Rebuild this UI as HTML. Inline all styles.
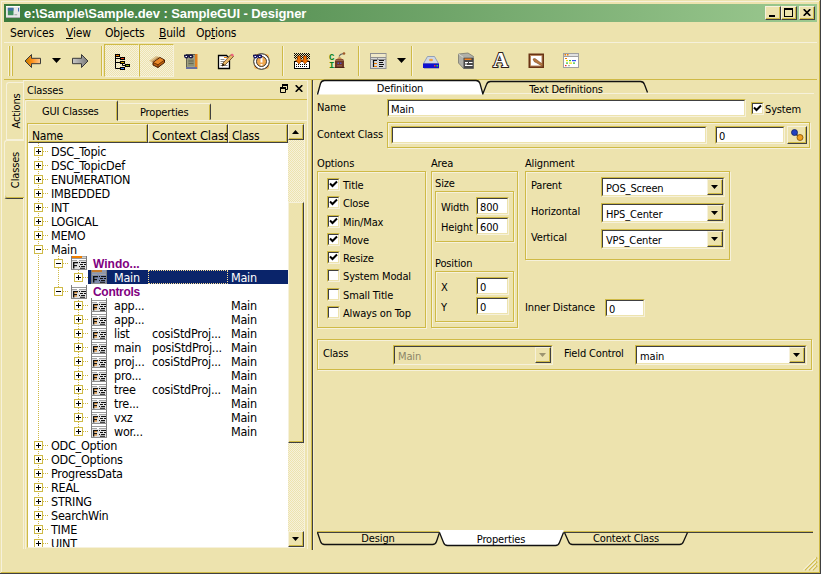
<!DOCTYPE html><html><head><meta charset="utf-8"><title>Designer</title><style>
*{box-sizing:border-box;margin:0;padding:0}
html,body{width:821px;height:574px;overflow:hidden;background:#ede3ae}
body{font-family:"DejaVu Sans Condensed","Liberation Sans",sans-serif;font-size:11px;letter-spacing:-0.15px;color:#000;position:relative}
.f12{font-size:12px;letter-spacing:-0.2px}
.f13{font-size:12.5px;letter-spacing:-0.25px}
.tr .t{margin-top:0}
.a{position:absolute}
.t{position:absolute;white-space:nowrap;line-height:14px;height:14px;margin-top:1px}
.u{text-decoration:underline}
.sunk{position:absolute;background:#fff;border:1px solid;border-color:#cfba46 #f6f1db #f6f1db #cfba46;}
.sunk:before{content:"";position:absolute;left:0;top:0;right:0;bottom:0;border:1px solid;border-color:#404040 #ede3ae #ede3ae #404040}
.sunk .t{left:3px;top:2px}
.grp{position:absolute;border:1px solid #cfba46;box-shadow:inset 1px 1px 0 #f6f1db,1px 1px 0 #f6f1db}
.btn{position:absolute;background:#ede3ae;border:1px solid;border-color:#f6f1db #404040 #404040 #f6f1db;box-shadow:inset -1px -1px 0 #cfba46}
.hl{position:absolute;height:1px}
.vl{position:absolute;width:1px}
.chk{position:absolute;width:13px;height:13px}
.dither{background-color:#ede3ae;background-image:conic-gradient(#f6f1db 25%,#ede3ae 0 50%,#f6f1db 0 75%,#ede3ae 0);background-size:2px 2px}
.arr{position:absolute;width:7px;height:4px;background:#000;clip-path:polygon(0 0,100% 0,50% 100%)}
.arrup{position:absolute;width:7px;height:4px;background:#000;clip-path:polygon(0 100%,100% 100%,50% 0)}
.row{position:absolute;left:0;height:14px;width:259px}
.pm{position:absolute;width:9px;height:9px;border:1px solid #cfba46;background:#fff}
.pm:before{content:"";position:absolute;left:1px;top:3px;width:5px;height:1px;background:#000}
.pm.p:after{content:"";position:absolute;left:3px;top:1px;width:1px;height:5px;background:#000}
.dh{position:absolute;height:1px;background-image:linear-gradient(90deg,#cfba46 50%,transparent 0);background-size:2px 1px}
.dv{position:absolute;width:1px;background-image:linear-gradient(#cfba46 50%,transparent 0);background-size:1px 2px}
.bold{font-weight:bold}
</style></head><body>
<div class="hl" style="left:1px;top:1px;width:818px;background:#f6f1db"></div>
<div class="vl" style="left:1px;top:1px;height:571px;background:#f6f1db"></div>
<div class="vl" style="left:819px;top:1px;height:572px;background:#cfba46"></div>
<div class="hl" style="left:1px;top:572px;width:819px;background:#cfba46"></div>
<div class="vl" style="left:820px;top:0px;height:574px;background:#404040"></div>
<div class="hl" style="left:0px;top:573px;width:821px;background:#404040"></div>
<div class="a" style="left:4px;top:4px;width:813px;height:18px;background:linear-gradient(90deg,#3b7a3c 0%,#9cc990 100%)"></div>
<svg class="a" style="left:6px;top:6px" width="14" height="12" viewBox="0 0 15 13" preserveAspectRatio="none"><rect x="0" y="0" width="15" height="13" fill="#e8e8e8"/><rect x="0" y="0" width="15" height="1" fill="#fff"/><rect x="2" y="2" width="6" height="8" fill="#3f8f5f"/><rect x="2" y="2" width="6" height="3" fill="#3f6fa8"/><rect x="9" y="9" width="3" height="1" fill="#999"/><rect x="13" y="2" width="1" height="4" fill="#2a5fb0"/><rect x="0" y="12" width="15" height="1" fill="#aaa"/></svg>
<div class="t " style="left:24px;top:6px;color:#fff;font-weight:bold;font-size:13px;letter-spacing:-0.07px;font-family:'Liberation Sans',sans-serif">e:\Sample\Sample.dev : SampleGUI - Designer</div>
<div class="btn" style="left:765px;top:6px;width:16px;height:14px"></div>
<div class="btn" style="left:781px;top:6px;width:16px;height:14px"></div>
<div class="btn" style="left:799px;top:6px;width:16px;height:14px"></div>
<div class="a" style="left:769px;top:15px;width:6px;height:2px;background:#000"></div>
<div class="a" style="left:784px;top:8px;width:9px;height:9px;border:1px solid #000;border-top-width:2px"></div>
<svg class="a" style="left:803px;top:9px" width="8" height="7" viewBox="0 0 8 7"><path d="M0.700 0.200L7.300 6.800M7.300 0.200L0.700 6.800" stroke="#000" stroke-width="1.700" fill="none"/></svg>
<div class="t f12" style="left:10px;top:25px;">Services</div>
<div class="t f12" style="left:66px;top:25px;"><span class="u">V</span>iew</div>
<div class="t f12" style="left:105px;top:25px;">Objects</div>
<div class="t f12" style="left:159px;top:25px;"><span class="u">B</span>uild</div>
<div class="t f12" style="left:196px;top:25px;">Op<span class="u">t</span>ions</div>
<div class="hl" style="left:4px;top:42px;width:813px;background:#f6f1db"></div>
<div class="vl" style="left:8px;top:46px;height:30px;background:#f6f1db"></div>
<div class="vl" style="left:9px;top:46px;height:30px;background:#cfba46"></div>
<div class="vl" style="left:11px;top:46px;height:30px;background:#f6f1db"></div>
<div class="vl" style="left:12px;top:46px;height:30px;background:#cfba46"></div>
<div class="vl" style="left:101px;top:46px;height:30px;background:#cfba46"></div>
<div class="vl" style="left:102px;top:46px;height:30px;background:#f6f1db"></div>
<div class="vl" style="left:282px;top:46px;height:30px;background:#cfba46"></div>
<div class="vl" style="left:283px;top:46px;height:30px;background:#f6f1db"></div>
<div class="vl" style="left:358px;top:46px;height:30px;background:#cfba46"></div>
<div class="vl" style="left:359px;top:46px;height:30px;background:#f6f1db"></div>
<div class="vl" style="left:411px;top:46px;height:30px;background:#cfba46"></div>
<div class="vl" style="left:412px;top:46px;height:30px;background:#f6f1db"></div>
<div class="a dither" style="left:104px;top:44px;width:35px;height:33px;border:1px solid;border-color:#cfba46 #f6f1db #f6f1db #cfba46"></div>
<div class="a dither" style="left:139px;top:44px;width:35px;height:33px;border:1px solid;border-color:#cfba46 #f6f1db #f6f1db #cfba46"></div>
<svg class="a" style="left:24px;top:53px" width="18" height="16" viewBox="0 0 18 16"><defs><linearGradient id="go" x1="0" x2="1"><stop offset="0" stop-color="#b87800"/><stop offset=".45" stop-color="#ff9018"/><stop offset="1" stop-color="#ffc890"/></linearGradient><linearGradient id="gg" x1="0" x2="1"><stop offset="0" stop-color="#c8c8c8"/><stop offset="1" stop-color="#787878"/></linearGradient></defs><path d="M1 8L7.5 1.5V5.3H16.5V10.7H7.5V14.5Z" fill="url(#go)" stroke="#3a3a3a" stroke-width="1"/></svg>
<svg class="a" style="left:71px;top:53px" width="18" height="16" viewBox="0 0 18 16"><path d="M17 8L10.5 1.5V5.3H1.5V10.7H10.5V14.5Z" fill="url(#gg)" stroke="#3a3a3a" stroke-width="1"/></svg>
<svg class="a" style="left:114px;top:53px" width="17" height="18" viewBox="0 0 17 18"><path d="M1.500 3V15.500H7M1.500 5.500H7M1.500 9.500H7M8.500 11V12.500H12" stroke="#000" stroke-width="1" fill="none"/><rect x="1.500" y="1.500" width="4" height="2" fill="#f08000" stroke="#000"/><rect x="6.500" y="4.500" width="4" height="2" fill="#e84010" stroke="#000"/><rect x="6.500" y="8.500" width="4" height="2" fill="#c8a000" stroke="#000"/><rect x="11.500" y="11.500" width="4" height="2" fill="#80a000" stroke="#000"/><rect x="6.500" y="14.500" width="4" height="2" fill="#4080f0" stroke="#000"/></svg>
<svg class="a" style="left:147px;top:54px" width="20" height="16" viewBox="0 0 20 16"><path d="M2 7L9 2L13 3L6 8Z" fill="#b88030" opacity=".4"/><path d="M4 8L11 3L13 3.500L6 8.500Z" fill="#a06020" opacity=".5"/><path d="M6 8.500L13 3.500L17.500 6L17.500 8.500L11 13.500L6 11Z" fill="#c06410" stroke="#401800" stroke-width="1"/><path d="M6.500 8.500L13 4L17 6.200L11 10.300Z" fill="#e88828"/><path d="M6 8.500L11 10.800L17.500 6M11 10.800V13.500" stroke="#602800" stroke-width=".8" fill="none"/></svg>
<svg class="a" style="left:183px;top:52px" width="16" height="18" viewBox="0 0 16 18"><rect x="3.5" y="2.500" width="10" height="14" fill="#a0a080" stroke="#606050"/><rect x="12" y="2" width="2.500" height="15" fill="#e08020"/><rect x="5" y="7" width="6" height="7" fill="#8c9078"/><path d="M5.500 9h5M5.500 11.500h5" stroke="#686850"/><rect x="3" y="15" width="11" height="2" fill="#6870a0"/><path d="M1 3.500h9" stroke="#101030" stroke-width="1.500"/><ellipse cx="3.500" cy="4.500" rx="2.300" ry="2" fill="#181848"/><ellipse cx="8" cy="4.500" rx="2.300" ry="2" fill="#181848"/><rect x="2.500" y="4" width="1.500" height="1" fill="#fff"/><rect x="7" y="4" width="1.500" height="1" fill="#fff"/></svg>
<svg class="a" style="left:217px;top:52px" width="18" height="18" viewBox="0 0 18 18"><path d="M1.500 3.500H9.500L12.500 6.500V16.500H1.500Z" fill="#fff" stroke="#000" stroke-width="1.300"/><path d="M3.500 7.500h4M3.500 9.500h5M3.500 11.500h3M3.500 13.500h7" stroke="#888"/><rect x="7" y="5" width="3" height="1" fill="#f08000"/><path d="M5 14L6 11L14 2.500L16.500 4.500L8 13Z" fill="#e8b868" stroke="#604020" stroke-width=".8"/><path d="M13.500 3L15 1.500L17 3L16 4.500Z" fill="#f06080"/><path d="M5 14L6 11.500L7.500 13Z" fill="#000"/></svg>
<svg class="a" style="left:252px;top:52px" width="18" height="18" viewBox="0 0 18 18"><rect x="2" y="2" width="15" height="15" rx="3" fill="#f0a850"/><circle cx="9.500" cy="9.500" r="6.500" fill="none" stroke="#fff" stroke-width="2.600"/><circle cx="9.500" cy="9.500" r="7.800" fill="none" stroke="#202020" stroke-width="1"/><circle cx="9.500" cy="9.500" r="5" fill="none" stroke="#303030" stroke-width=".9"/><path d="M9.500 5.500V10.500M9.500 12v1.500" stroke="#fff" stroke-width="2"/><path d="M1 3.500h9" stroke="#101030" stroke-width="1.500"/><ellipse cx="3.500" cy="4.500" rx="2.300" ry="2" fill="#181868"/><ellipse cx="8" cy="4.500" rx="2.300" ry="2" fill="#181868"/><rect x="2.500" y="4" width="1.500" height="1" fill="#fff"/><rect x="7" y="4" width="1.500" height="1" fill="#fff"/></svg>
<svg class="a" style="left:293px;top:52px" width="18" height="18" viewBox="0 0 18 18"><defs><pattern id="dots" width="2" height="2" patternUnits="userSpaceOnUse"><rect width="1" height="1" fill="#000"/><rect x="1" y="1" width="1" height="1" fill="#000"/></pattern></defs><rect x="1" y="1" width="16" height="6" fill="url(#dots)"/><rect x="1.500" y="9.500" width="15" height="7" fill="#fff" stroke="#000"/><path d="M3 12.500h12M3 14.500h12" stroke="#000" stroke-dasharray="1 1"/><path d="M4.500 4h3v4h2l-3.500 4l-3.500-4h2Z" fill="#f07000" stroke="#803000" stroke-width=".6"/><path d="M10.500 4h3v4h2l-3.500 4l-3.500-4h2Z" fill="#f07000" stroke="#803000" stroke-width=".6"/></svg>
<div class="t" style="left:329px;top:53px;font:bold 9px/8px 'Liberation Mono',monospace;color:#0c8420;letter-spacing:0;height:16px">C<br>I</div>
<svg class="a" style="left:333px;top:52px" width="14" height="18" viewBox="0 0 14 18"><path d="M6 4.500L7.500 2.500L10.500 1.500" stroke="#606060" stroke-width="1.200" fill="none"/><circle cx="11" cy="1.500" r="1.300" fill="#a05828"/><path d="M4 7Q6.500 3 9 7Z" fill="#c89050"/><path d="M3 7H10L11 8.500H2Z" fill="#8a4a30"/><rect x="2" y="8.500" width="9" height="7" fill="#6e3626"/><rect x="4.500" y="10.500" width="1.500" height="1.500" fill="#5050c0"/><rect x="7" y="10.500" width="1.500" height="1.500" fill="#5050c0"/><rect x="4" y="13" width="5" height="1.500" fill="#8c5848"/><rect x="1.500" y="15" width="10" height="1" fill="#4a2418"/></svg>
<svg class="a" style="left:370px;top:53px" width="17" height="16" viewBox="0 0 17 16"><rect x=".5" y=".5" width="15.500" height="15" fill="#d8d8d8" stroke="#909090"/><rect x="1" y="1" width="14.500" height="3" fill="#efe8c8"/><path d="M1 4.500h15M1 6.500h15M7.500 4.500v2" stroke="#909090"/><path d="M3 7.500h4M3 10.500h4M3.500 7v3M3.500 11v3M3 13.500h4M9 7.500h5M9 9.500h4M9 11.500h5M9 13.500h4" stroke="#111" stroke-width="1.200"/><rect x="3" y="7" width="4" height="1" fill="#111"/><rect x="4" y="10" width="3" height="1" fill="#f08000"/><rect x="4" y="13" width="3" height="1" fill="#f08000"/></svg>
<svg class="a" style="left:422px;top:55px" width="18" height="15" viewBox="0 0 18 15"><path d="M5.500 1.500H12.500L16.500 8.500H1.500Z" fill="#d0d8e4" stroke="#8090b0" stroke-width=".8"/><ellipse cx="9" cy="5" rx="2" ry="1.300" fill="#f0a040"/><rect x="1" y="8.500" width="16" height="4.500" fill="#1010d0"/><rect x="12" y="10" width="1.500" height="1.500" fill="#f03030"/><rect x="14.500" y="10" width="1.500" height="1.500" fill="#30e030"/><path d="M2 13.500h15" stroke="#8888a0" opacity=".6"/></svg>
<svg class="a" style="left:457px;top:52px" width="18" height="18" viewBox="0 0 18 18"><path d="M1.500 2L11 1L16.500 4.500V16.500H6.500L1.500 11Z" fill="#b0b0a8" stroke="#787870" stroke-width=".8"/><path d="M1.500 2L6.500 5.500H16.500" stroke="#d8d8d0" fill="none"/><rect x="6.500" y="5.500" width="10" height="11" fill="#484848"/><rect x="7.500" y="6.500" width="7" height="1.500" fill="#f08020"/><path d="M8 10.500h3M12 10.500h3.500M8 13.500h7.500M8 12h2" stroke="#fff" stroke-width="1.200"/></svg>
<svg class="a" style="left:491px;top:50px" width="20" height="20" viewBox="0 0 20 20"><text x="10" y="17.500" font-family="Liberation Serif,serif" font-weight="bold" font-size="21" text-anchor="middle" fill="#c8a060" letter-spacing="0">A</text><text x="9.500" y="17" font-family="Liberation Serif,serif" font-weight="bold" font-size="21" text-anchor="middle" fill="#fff" stroke="#2a2018" stroke-width="2" paint-order="stroke" letter-spacing="0">A</text></svg>
<svg class="a" style="left:528px;top:53px" width="17" height="16" viewBox="0 0 17 16"><rect x="0.500" y="0.500" width="15.500" height="14.500" fill="#6a3414"/><rect x="2" y="2" width="12.500" height="11.500" fill="#b88860"/><rect x="3" y="3" width="10.500" height="9.500" fill="#fff"/><path d="M5 6Q7 4.500 9 7L15 11.500L14 13L8 9.500Q6 9.500 5 6Z" fill="#b87840" stroke="#805028" stroke-width=".6"/></svg>
<svg class="a" style="left:562px;top:52px" width="18" height="17" viewBox="0 0 18 17"><rect x="1.500" y="1.500" width="15" height="14" fill="#fff" stroke="#a0a0a0"/><rect x="2" y="2" width="14" height="2" fill="#e0e0e0"/><rect x="2.500" y="2" width="1.500" height="1.500" fill="#f08000"/><rect x="5" y="2" width="1.500" height="1.500" fill="#f08000"/><path d="M1.500 4.500h15" stroke="#a0a0a0"/><rect x="3" y="6" width="2" height="1" fill="#f08000"/><rect x="4" y="8" width="2" height="1.200" fill="#f0e000"/><rect x="7" y="8" width="2" height="1.200" fill="#30c030"/><rect x="10" y="8" width="4" height="1.200" fill="#3050f0"/><rect x="4" y="10.500" width="2" height="1.200" fill="#30c030"/><rect x="7" y="10.500" width="3" height="1.200" fill="#f0e000"/><rect x="11" y="10.500" width="2" height="1.200" fill="#30c030"/><rect x="3" y="13" width="1.500" height="1.200" fill="#f03030"/><rect x="6" y="13" width="2" height="1.200" fill="#b0b0b0"/></svg>
<svg class="a" style="left:52px;top:58px" width="9" height="5" viewBox="0 0 9 5"><path d="M0 0H9L4.500 5Z" fill="#000"/></svg>
<svg class="a" style="left:397px;top:58px" width="9" height="5" viewBox="0 0 9 5"><path d="M0 0H9L4.500 5Z" fill="#000"/></svg>
<div class="hl" style="left:4px;top:79px;width:813px;background:#cfba46"></div>
<div class="a" style="left:6px;top:82px;width:18px;height:58px;border:1px solid #f6f1db;border-right:none;border-radius:3px 0 0 0"></div>
<div class="a" style="left:4px;top:140px;width:20px;height:58px;border-left:1px solid #f6f1db;border-top:1px solid #f6f1db;border-bottom:1px solid #404040;box-shadow:inset 0 -1px 0 #cfba46;height:59px;border-radius:3px 0 0 3px"></div>
<div class="vl" style="left:23px;top:80px;height:60px;background:#f6f1db"></div>
<div class="vl" style="left:23px;top:198px;height:351px;background:#f6f1db"></div>
<div class="t" style="left:-11px;top:103px;width:56px;text-align:center;transform:rotate(-90deg)">Actions</div>
<div class="t" style="left:-12px;top:162px;width:56px;text-align:center;transform:rotate(-90deg)">Classes</div>
<div class="t " style="left:27px;top:83px;">Classes</div>
<svg class="a" style="left:280px;top:84px" width="9" height="9" viewBox="0 0 9 9"><rect x="2" y="0" width="6" height="2" fill="#000"/><path d="M2.500 1v4.500h5v-4.500" stroke="#000" fill="none"/><rect x="0" y="3" width="6" height="6" fill="#ede3ae"/><rect x="0" y="3" width="6" height="2" fill="#000"/><path d="M0.500 4v4.500h5v-4.500" stroke="#000" fill="none"/></svg>
<svg class="a" style="left:295px;top:85px" width="8" height="7" viewBox="0 0 8 7"><path d="M0.700 0.200L7.300 6.800M7.300 0.200L0.700 6.800" stroke="#000" stroke-width="1.600" fill="none"/></svg>
<div class="hl" style="left:24px;top:80px;width:284px;background:#f6f1db"></div>
<div class="hl" style="left:25px;top:99px;width:282px;background:#cfba46"></div>
<div class="a" style="left:25px;top:100px;width:93px;height:21px;border:1px solid;border-color:#f6f1db #404040 transparent #f6f1db;border-radius:2px 2px 0 0"></div>
<div class="vl" style="left:116px;top:102px;height:18px;background:#cfba46"></div>
<div class="t " style="left:42px;top:104px;">GUI Classes</div>
<div class="a" style="left:118px;top:103px;width:93px;height:17px;border:1px solid;border-color:#f6f1db #404040 transparent transparent;border-radius:0 2px 0 0"></div>
<div class="vl" style="left:209px;top:105px;height:15px;background:#cfba46"></div>
<div class="t " style="left:140px;top:105px;">Properties</div>
<div class="hl" style="left:118px;top:120px;width:189px;background:#f6f1db"></div>
<div class="vl" style="left:25px;top:120px;height:429px;background:#f6f1db"></div>
<div class="vl" style="left:307px;top:80px;height:469px;background:#f6f1db"></div>
<div class="a" style="left:27px;top:123px;width:278px;height:425px;border:1px solid;border-color:#cfba46 #f6f1db #f6f1db #cfba46;background:#fff"></div>
<div class="btn" style="left:28px;top:124px;width:120px;height:19px;box-shadow:inset -1px -1px 0 #cfba46"><div class="t f12" style="left:3px;top:3px;overflow:hidden;width:115px">Name</div></div>
<div class="btn" style="left:148px;top:124px;width:80px;height:19px;box-shadow:inset -1px -1px 0 #cfba46"><div class="t f12" style="left:3px;top:3px;overflow:hidden;width:75px"><span style="font-size:13px">Context Class</span></div></div>
<div class="btn" style="left:228px;top:124px;width:60px;height:19px;box-shadow:inset -1px -1px 0 #cfba46"><div class="t f12" style="left:3px;top:3px;overflow:hidden;width:55px">Class</div></div>
<div class="a dither" style="left:288px;top:124px;width:16px;height:423px"></div>
<div class="btn" style="left:288px;top:124px;width:16px;height:16px"><div class="arrup" style="left:3px;top:5px"></div></div>
<div class="btn" style="left:288px;top:202px;width:16px;height:241px"></div>
<div class="btn" style="left:288px;top:531px;width:16px;height:16px"><div class="arr" style="left:3px;top:5px"></div></div>
<div class="a f13 tr" style="left:29px;top:143px;width:259px;height:404px;overflow:hidden">
<div class="dv" style="left:9px;top:0;height:404px"></div>
<div class="dv" style="left:29px;top:113px;height:40px"></div>
<div class="dv" style="left:49px;top:127px;height:8px"></div>
<div class="dv" style="left:49px;top:155px;height:134px"></div>
<div class="dh" style="left:14px;top:8px;width:6px"></div>
<div class="pm p" style="left:5px;top:4px"></div>
<div class="t " style="left:22px;top:2px;">DSC_Topic</div>
<div class="dh" style="left:14px;top:22px;width:6px"></div>
<div class="pm p" style="left:5px;top:18px"></div>
<div class="t " style="left:22px;top:16px;">DSC_TopicDef</div>
<div class="dh" style="left:14px;top:36px;width:6px"></div>
<div class="pm p" style="left:5px;top:32px"></div>
<div class="t " style="left:22px;top:30px;">ENUMERATION</div>
<div class="dh" style="left:14px;top:50px;width:6px"></div>
<div class="pm p" style="left:5px;top:46px"></div>
<div class="t " style="left:22px;top:44px;">IMBEDDED</div>
<div class="dh" style="left:14px;top:64px;width:6px"></div>
<div class="pm p" style="left:5px;top:60px"></div>
<div class="t " style="left:22px;top:58px;">INT</div>
<div class="dh" style="left:14px;top:78px;width:6px"></div>
<div class="pm p" style="left:5px;top:74px"></div>
<div class="t " style="left:22px;top:72px;">LOGICAL</div>
<div class="dh" style="left:14px;top:92px;width:6px"></div>
<div class="pm p" style="left:5px;top:88px"></div>
<div class="t " style="left:22px;top:86px;">MEMO</div>
<div class="dh" style="left:14px;top:106px;width:6px"></div>
<div class="pm" style="left:5px;top:102px"></div>
<div class="t " style="left:22px;top:100px;">Main</div>
<div class="dh" style="left:34px;top:120px;width:6px"></div>
<div class="pm" style="left:25px;top:116px"></div>
<svg class="a" style="left:42px;top:113px" width="16" height="14" viewBox="0 0 16 14"><rect x="0" y="0" width="16" height="14" fill="#fff"/><rect x="0" y="5" width="16" height="9" fill="#e2e2e2"/><rect x="1" y="0" width="10" height="2" fill="#f08000"/><rect x="11.500" y="0" width="1" height="1.500" fill="#555"/><rect x="13.500" y="0" width="1" height="1.500" fill="#555"/><rect x="0" y="2" width="16" height="1" fill="#9a9a9a"/><rect x="1" y="4" width="5" height="1" fill="#a4a4a4"/><rect x="8" y="4" width="7" height="1" fill="#a4a4a4"/><rect x="0" y="0" width="1" height="14" fill="#7c7c7c"/><rect x="15" y="0" width="1" height="14" fill="#7c7c7c"/><rect x="0" y="13" width="16" height="1" fill="#8c8c8c"/><rect x="2" y="6" width="5" height="1.300" fill="#111"/><rect x="2" y="6" width="1.400" height="6.500" fill="#111"/><rect x="2" y="9" width="4" height="1.200" fill="#111"/><rect x="3.500" y="7.300" width="2.500" height="1" fill="none"/><rect x="3.500" y="10.500" width="2.500" height="1" fill="none"/><path d="M8 6.500h1M10 6.500h5M9 8.500h3M13 8.500h2M8 10.500h1M10 10.500h4M9 12.200h5" stroke="#111" stroke-width="1.100" fill="none"/></svg>
<div class="t " style="left:64px;top:114px;color:#800080;font-weight:bold;font-family:'Liberation Sans',sans-serif;font-size:12px;letter-spacing:0">Windo...</div>
<div class="a" style="left:59px;top:127px;width:200px;height:14px;background:#0a246a"></div>
<div class="a" style="left:119px;top:127px;width:80px;height:14px;border:1px dotted #f5db95"></div>
<div class="dh" style="left:54px;top:134px;width:6px"></div>
<div class="pm p" style="left:45px;top:130px"></div>
<svg class="a" style="left:62px;top:127px" width="16" height="14" viewBox="0 0 16 14"><rect x="0" y="0" width="16" height="14" fill="#8a94b4"/><rect x="0" y="5" width="16" height="9" fill="#7c88aa"/><rect x="1" y="0" width="10" height="2" fill="#c87828"/><rect x="11.500" y="0" width="1" height="1.500" fill="#99a"/><rect x="13.500" y="0" width="1" height="1.500" fill="#99a"/><rect x="0" y="2" width="16" height="1" fill="#9a9a9a"/><rect x="1" y="4" width="5" height="1" fill="#a4a4a4"/><rect x="8" y="4" width="7" height="1" fill="#a4a4a4"/><rect x="0" y="0" width="1" height="14" fill="#7c7c7c"/><rect x="15" y="0" width="1" height="14" fill="#7c7c7c"/><rect x="0" y="13" width="16" height="1" fill="#8c8c8c"/><rect x="2" y="6" width="5" height="1.300" fill="#111"/><rect x="2" y="6" width="1.400" height="6.500" fill="#111"/><rect x="2" y="9" width="4" height="1.200" fill="#111"/><rect x="3.500" y="7.300" width="2.500" height="1" fill="none"/><rect x="3.500" y="10.500" width="2.500" height="1" fill="none"/><path d="M8 6.500h1M10 6.500h5M9 8.500h3M13 8.500h2M8 10.500h1M10 10.500h4M9 12.200h5" stroke="#111" stroke-width="1.100" fill="none"/></svg>
<div class="t " style="left:85px;top:128px;color:#fff;">Main</div>
<div class="t " style="left:202px;top:128px;color:#fff;">Main</div>
<div class="dh" style="left:34px;top:148px;width:6px"></div>
<div class="pm" style="left:25px;top:144px"></div>
<svg class="a" style="left:42px;top:142px" width="16" height="14" viewBox="0 0 16 14"><rect x="0" y="0" width="16" height="14" fill="#fff"/><rect x="0" y="5" width="16" height="9" fill="#e2e2e2"/><rect x="1" y="0" width="10" height="2" fill="none"/><rect x="11.500" y="0" width="1" height="1.500" fill="none"/><rect x="13.500" y="0" width="1" height="1.500" fill="none"/><rect x="0" y="2" width="16" height="1" fill="#9a9a9a"/><rect x="1" y="4" width="5" height="1" fill="#a4a4a4"/><rect x="8" y="4" width="7" height="1" fill="#a4a4a4"/><rect x="0" y="0" width="1" height="14" fill="#7c7c7c"/><rect x="15" y="0" width="1" height="14" fill="#7c7c7c"/><rect x="0" y="13" width="16" height="1" fill="#8c8c8c"/><rect x="2" y="6" width="5" height="1.300" fill="#111"/><rect x="2" y="6" width="1.400" height="6.500" fill="#111"/><rect x="2" y="9" width="4" height="1.200" fill="#111"/><rect x="3.500" y="7.300" width="2.500" height="1" fill="#f08000"/><rect x="3.500" y="10.500" width="2.500" height="1" fill="#f08000"/><path d="M8 6.500h1M10 6.500h5M9 8.500h3M13 8.500h2M8 10.500h1M10 10.500h4M9 12.200h5" stroke="#111" stroke-width="1.100" fill="none"/></svg>
<div class="t " style="left:64px;top:142px;color:#800080;font-weight:bold;font-family:'Liberation Sans',sans-serif;font-size:12px;letter-spacing:-0.3px">Controls</div>
<div class="dh" style="left:54px;top:162px;width:6px"></div>
<div class="pm p" style="left:45px;top:158px"></div>
<svg class="a" style="left:62px;top:155px" width="16" height="14" viewBox="0 0 16 14"><rect x="0" y="0" width="16" height="14" fill="#fff"/><rect x="0" y="5" width="16" height="9" fill="#e2e2e2"/><rect x="1" y="0" width="10" height="2" fill="none"/><rect x="11.500" y="0" width="1" height="1.500" fill="none"/><rect x="13.500" y="0" width="1" height="1.500" fill="none"/><rect x="0" y="2" width="16" height="1" fill="#9a9a9a"/><rect x="1" y="4" width="5" height="1" fill="#a4a4a4"/><rect x="8" y="4" width="7" height="1" fill="#a4a4a4"/><rect x="0" y="0" width="1" height="14" fill="#7c7c7c"/><rect x="15" y="0" width="1" height="14" fill="#7c7c7c"/><rect x="0" y="13" width="16" height="1" fill="#8c8c8c"/><rect x="2" y="6" width="5" height="1.300" fill="#111"/><rect x="2" y="6" width="1.400" height="6.500" fill="#111"/><rect x="2" y="9" width="4" height="1.200" fill="#111"/><rect x="3.500" y="7.300" width="2.500" height="1" fill="#f08000"/><rect x="3.500" y="10.500" width="2.500" height="1" fill="#f08000"/><path d="M8 6.500h1M10 6.500h5M9 8.500h3M13 8.500h2M8 10.500h1M10 10.500h4M9 12.200h5" stroke="#111" stroke-width="1.100" fill="none"/></svg>
<div class="t " style="left:85px;top:156px;">app...</div>
<div class="t " style="left:202px;top:156px;">Main</div>
<div class="dh" style="left:54px;top:176px;width:6px"></div>
<div class="pm p" style="left:45px;top:172px"></div>
<svg class="a" style="left:62px;top:169px" width="16" height="14" viewBox="0 0 16 14"><rect x="0" y="0" width="16" height="14" fill="#fff"/><rect x="0" y="5" width="16" height="9" fill="#e2e2e2"/><rect x="1" y="0" width="10" height="2" fill="none"/><rect x="11.500" y="0" width="1" height="1.500" fill="none"/><rect x="13.500" y="0" width="1" height="1.500" fill="none"/><rect x="0" y="2" width="16" height="1" fill="#9a9a9a"/><rect x="1" y="4" width="5" height="1" fill="#a4a4a4"/><rect x="8" y="4" width="7" height="1" fill="#a4a4a4"/><rect x="0" y="0" width="1" height="14" fill="#7c7c7c"/><rect x="15" y="0" width="1" height="14" fill="#7c7c7c"/><rect x="0" y="13" width="16" height="1" fill="#8c8c8c"/><rect x="2" y="6" width="5" height="1.300" fill="#111"/><rect x="2" y="6" width="1.400" height="6.500" fill="#111"/><rect x="2" y="9" width="4" height="1.200" fill="#111"/><rect x="3.500" y="7.300" width="2.500" height="1" fill="#f08000"/><rect x="3.500" y="10.500" width="2.500" height="1" fill="#f08000"/><path d="M8 6.500h1M10 6.500h5M9 8.500h3M13 8.500h2M8 10.500h1M10 10.500h4M9 12.200h5" stroke="#111" stroke-width="1.100" fill="none"/></svg>
<div class="t " style="left:85px;top:170px;">app...</div>
<div class="t " style="left:202px;top:170px;">Main</div>
<div class="dh" style="left:54px;top:190px;width:6px"></div>
<div class="pm p" style="left:45px;top:186px"></div>
<svg class="a" style="left:62px;top:183px" width="16" height="14" viewBox="0 0 16 14"><rect x="0" y="0" width="16" height="14" fill="#fff"/><rect x="0" y="5" width="16" height="9" fill="#e2e2e2"/><rect x="1" y="0" width="10" height="2" fill="none"/><rect x="11.500" y="0" width="1" height="1.500" fill="none"/><rect x="13.500" y="0" width="1" height="1.500" fill="none"/><rect x="0" y="2" width="16" height="1" fill="#9a9a9a"/><rect x="1" y="4" width="5" height="1" fill="#a4a4a4"/><rect x="8" y="4" width="7" height="1" fill="#a4a4a4"/><rect x="0" y="0" width="1" height="14" fill="#7c7c7c"/><rect x="15" y="0" width="1" height="14" fill="#7c7c7c"/><rect x="0" y="13" width="16" height="1" fill="#8c8c8c"/><rect x="2" y="6" width="5" height="1.300" fill="#111"/><rect x="2" y="6" width="1.400" height="6.500" fill="#111"/><rect x="2" y="9" width="4" height="1.200" fill="#111"/><rect x="3.500" y="7.300" width="2.500" height="1" fill="#f08000"/><rect x="3.500" y="10.500" width="2.500" height="1" fill="#f08000"/><path d="M8 6.500h1M10 6.500h5M9 8.500h3M13 8.500h2M8 10.500h1M10 10.500h4M9 12.200h5" stroke="#111" stroke-width="1.100" fill="none"/></svg>
<div class="t " style="left:85px;top:184px;">list</div>
<div class="t " style="left:123px;top:184px;">cosiStdProj...</div>
<div class="t " style="left:202px;top:184px;">Main</div>
<div class="dh" style="left:54px;top:204px;width:6px"></div>
<div class="pm p" style="left:45px;top:200px"></div>
<svg class="a" style="left:62px;top:197px" width="16" height="14" viewBox="0 0 16 14"><rect x="0" y="0" width="16" height="14" fill="#fff"/><rect x="0" y="5" width="16" height="9" fill="#e2e2e2"/><rect x="1" y="0" width="10" height="2" fill="none"/><rect x="11.500" y="0" width="1" height="1.500" fill="none"/><rect x="13.500" y="0" width="1" height="1.500" fill="none"/><rect x="0" y="2" width="16" height="1" fill="#9a9a9a"/><rect x="1" y="4" width="5" height="1" fill="#a4a4a4"/><rect x="8" y="4" width="7" height="1" fill="#a4a4a4"/><rect x="0" y="0" width="1" height="14" fill="#7c7c7c"/><rect x="15" y="0" width="1" height="14" fill="#7c7c7c"/><rect x="0" y="13" width="16" height="1" fill="#8c8c8c"/><rect x="2" y="6" width="5" height="1.300" fill="#111"/><rect x="2" y="6" width="1.400" height="6.500" fill="#111"/><rect x="2" y="9" width="4" height="1.200" fill="#111"/><rect x="3.500" y="7.300" width="2.500" height="1" fill="#f08000"/><rect x="3.500" y="10.500" width="2.500" height="1" fill="#f08000"/><path d="M8 6.500h1M10 6.500h5M9 8.500h3M13 8.500h2M8 10.500h1M10 10.500h4M9 12.200h5" stroke="#111" stroke-width="1.100" fill="none"/></svg>
<div class="t " style="left:85px;top:198px;">main</div>
<div class="t " style="left:123px;top:198px;">posiStdProj...</div>
<div class="t " style="left:202px;top:198px;">Main</div>
<div class="dh" style="left:54px;top:218px;width:6px"></div>
<div class="pm p" style="left:45px;top:214px"></div>
<svg class="a" style="left:62px;top:211px" width="16" height="14" viewBox="0 0 16 14"><rect x="0" y="0" width="16" height="14" fill="#fff"/><rect x="0" y="5" width="16" height="9" fill="#e2e2e2"/><rect x="1" y="0" width="10" height="2" fill="none"/><rect x="11.500" y="0" width="1" height="1.500" fill="none"/><rect x="13.500" y="0" width="1" height="1.500" fill="none"/><rect x="0" y="2" width="16" height="1" fill="#9a9a9a"/><rect x="1" y="4" width="5" height="1" fill="#a4a4a4"/><rect x="8" y="4" width="7" height="1" fill="#a4a4a4"/><rect x="0" y="0" width="1" height="14" fill="#7c7c7c"/><rect x="15" y="0" width="1" height="14" fill="#7c7c7c"/><rect x="0" y="13" width="16" height="1" fill="#8c8c8c"/><rect x="2" y="6" width="5" height="1.300" fill="#111"/><rect x="2" y="6" width="1.400" height="6.500" fill="#111"/><rect x="2" y="9" width="4" height="1.200" fill="#111"/><rect x="3.500" y="7.300" width="2.500" height="1" fill="#f08000"/><rect x="3.500" y="10.500" width="2.500" height="1" fill="#f08000"/><path d="M8 6.500h1M10 6.500h5M9 8.500h3M13 8.500h2M8 10.500h1M10 10.500h4M9 12.200h5" stroke="#111" stroke-width="1.100" fill="none"/></svg>
<div class="t " style="left:85px;top:212px;">proj...</div>
<div class="t " style="left:123px;top:212px;">cosiStdProj...</div>
<div class="t " style="left:202px;top:212px;">Main</div>
<div class="dh" style="left:54px;top:232px;width:6px"></div>
<div class="pm p" style="left:45px;top:228px"></div>
<svg class="a" style="left:62px;top:225px" width="16" height="14" viewBox="0 0 16 14"><rect x="0" y="0" width="16" height="14" fill="#fff"/><rect x="0" y="5" width="16" height="9" fill="#e2e2e2"/><rect x="1" y="0" width="10" height="2" fill="none"/><rect x="11.500" y="0" width="1" height="1.500" fill="none"/><rect x="13.500" y="0" width="1" height="1.500" fill="none"/><rect x="0" y="2" width="16" height="1" fill="#9a9a9a"/><rect x="1" y="4" width="5" height="1" fill="#a4a4a4"/><rect x="8" y="4" width="7" height="1" fill="#a4a4a4"/><rect x="0" y="0" width="1" height="14" fill="#7c7c7c"/><rect x="15" y="0" width="1" height="14" fill="#7c7c7c"/><rect x="0" y="13" width="16" height="1" fill="#8c8c8c"/><rect x="2" y="6" width="5" height="1.300" fill="#111"/><rect x="2" y="6" width="1.400" height="6.500" fill="#111"/><rect x="2" y="9" width="4" height="1.200" fill="#111"/><rect x="3.500" y="7.300" width="2.500" height="1" fill="#f08000"/><rect x="3.500" y="10.500" width="2.500" height="1" fill="#f08000"/><path d="M8 6.500h1M10 6.500h5M9 8.500h3M13 8.500h2M8 10.500h1M10 10.500h4M9 12.200h5" stroke="#111" stroke-width="1.100" fill="none"/></svg>
<div class="t " style="left:85px;top:226px;">pro...</div>
<div class="t " style="left:202px;top:226px;">Main</div>
<div class="dh" style="left:54px;top:246px;width:6px"></div>
<div class="pm p" style="left:45px;top:242px"></div>
<svg class="a" style="left:62px;top:239px" width="16" height="14" viewBox="0 0 16 14"><rect x="0" y="0" width="16" height="14" fill="#fff"/><rect x="0" y="5" width="16" height="9" fill="#e2e2e2"/><rect x="1" y="0" width="10" height="2" fill="none"/><rect x="11.500" y="0" width="1" height="1.500" fill="none"/><rect x="13.500" y="0" width="1" height="1.500" fill="none"/><rect x="0" y="2" width="16" height="1" fill="#9a9a9a"/><rect x="1" y="4" width="5" height="1" fill="#a4a4a4"/><rect x="8" y="4" width="7" height="1" fill="#a4a4a4"/><rect x="0" y="0" width="1" height="14" fill="#7c7c7c"/><rect x="15" y="0" width="1" height="14" fill="#7c7c7c"/><rect x="0" y="13" width="16" height="1" fill="#8c8c8c"/><rect x="2" y="6" width="5" height="1.300" fill="#111"/><rect x="2" y="6" width="1.400" height="6.500" fill="#111"/><rect x="2" y="9" width="4" height="1.200" fill="#111"/><rect x="3.500" y="7.300" width="2.500" height="1" fill="#f08000"/><rect x="3.500" y="10.500" width="2.500" height="1" fill="#f08000"/><path d="M8 6.500h1M10 6.500h5M9 8.500h3M13 8.500h2M8 10.500h1M10 10.500h4M9 12.200h5" stroke="#111" stroke-width="1.100" fill="none"/></svg>
<div class="t " style="left:85px;top:240px;">tree</div>
<div class="t " style="left:123px;top:240px;">cosiStdProj...</div>
<div class="t " style="left:202px;top:240px;">Main</div>
<div class="dh" style="left:54px;top:260px;width:6px"></div>
<div class="pm p" style="left:45px;top:256px"></div>
<svg class="a" style="left:62px;top:253px" width="16" height="14" viewBox="0 0 16 14"><rect x="0" y="0" width="16" height="14" fill="#fff"/><rect x="0" y="5" width="16" height="9" fill="#e2e2e2"/><rect x="1" y="0" width="10" height="2" fill="none"/><rect x="11.500" y="0" width="1" height="1.500" fill="none"/><rect x="13.500" y="0" width="1" height="1.500" fill="none"/><rect x="0" y="2" width="16" height="1" fill="#9a9a9a"/><rect x="1" y="4" width="5" height="1" fill="#a4a4a4"/><rect x="8" y="4" width="7" height="1" fill="#a4a4a4"/><rect x="0" y="0" width="1" height="14" fill="#7c7c7c"/><rect x="15" y="0" width="1" height="14" fill="#7c7c7c"/><rect x="0" y="13" width="16" height="1" fill="#8c8c8c"/><rect x="2" y="6" width="5" height="1.300" fill="#111"/><rect x="2" y="6" width="1.400" height="6.500" fill="#111"/><rect x="2" y="9" width="4" height="1.200" fill="#111"/><rect x="3.500" y="7.300" width="2.500" height="1" fill="#f08000"/><rect x="3.500" y="10.500" width="2.500" height="1" fill="#f08000"/><path d="M8 6.500h1M10 6.500h5M9 8.500h3M13 8.500h2M8 10.500h1M10 10.500h4M9 12.200h5" stroke="#111" stroke-width="1.100" fill="none"/></svg>
<div class="t " style="left:85px;top:254px;">tre...</div>
<div class="t " style="left:202px;top:254px;">Main</div>
<div class="dh" style="left:54px;top:274px;width:6px"></div>
<div class="pm p" style="left:45px;top:270px"></div>
<svg class="a" style="left:62px;top:267px" width="16" height="14" viewBox="0 0 16 14"><rect x="0" y="0" width="16" height="14" fill="#fff"/><rect x="0" y="5" width="16" height="9" fill="#e2e2e2"/><rect x="1" y="0" width="10" height="2" fill="none"/><rect x="11.500" y="0" width="1" height="1.500" fill="none"/><rect x="13.500" y="0" width="1" height="1.500" fill="none"/><rect x="0" y="2" width="16" height="1" fill="#9a9a9a"/><rect x="1" y="4" width="5" height="1" fill="#a4a4a4"/><rect x="8" y="4" width="7" height="1" fill="#a4a4a4"/><rect x="0" y="0" width="1" height="14" fill="#7c7c7c"/><rect x="15" y="0" width="1" height="14" fill="#7c7c7c"/><rect x="0" y="13" width="16" height="1" fill="#8c8c8c"/><rect x="2" y="6" width="5" height="1.300" fill="#111"/><rect x="2" y="6" width="1.400" height="6.500" fill="#111"/><rect x="2" y="9" width="4" height="1.200" fill="#111"/><rect x="3.500" y="7.300" width="2.500" height="1" fill="#f08000"/><rect x="3.500" y="10.500" width="2.500" height="1" fill="#f08000"/><path d="M8 6.500h1M10 6.500h5M9 8.500h3M13 8.500h2M8 10.500h1M10 10.500h4M9 12.200h5" stroke="#111" stroke-width="1.100" fill="none"/></svg>
<div class="t " style="left:85px;top:268px;">vxz</div>
<div class="t " style="left:202px;top:268px;">Main</div>
<div class="dh" style="left:54px;top:288px;width:6px"></div>
<div class="pm p" style="left:45px;top:284px"></div>
<svg class="a" style="left:62px;top:281px" width="16" height="14" viewBox="0 0 16 14"><rect x="0" y="0" width="16" height="14" fill="#fff"/><rect x="0" y="5" width="16" height="9" fill="#e2e2e2"/><rect x="1" y="0" width="10" height="2" fill="none"/><rect x="11.500" y="0" width="1" height="1.500" fill="none"/><rect x="13.500" y="0" width="1" height="1.500" fill="none"/><rect x="0" y="2" width="16" height="1" fill="#9a9a9a"/><rect x="1" y="4" width="5" height="1" fill="#a4a4a4"/><rect x="8" y="4" width="7" height="1" fill="#a4a4a4"/><rect x="0" y="0" width="1" height="14" fill="#7c7c7c"/><rect x="15" y="0" width="1" height="14" fill="#7c7c7c"/><rect x="0" y="13" width="16" height="1" fill="#8c8c8c"/><rect x="2" y="6" width="5" height="1.300" fill="#111"/><rect x="2" y="6" width="1.400" height="6.500" fill="#111"/><rect x="2" y="9" width="4" height="1.200" fill="#111"/><rect x="3.500" y="7.300" width="2.500" height="1" fill="#f08000"/><rect x="3.500" y="10.500" width="2.500" height="1" fill="#f08000"/><path d="M8 6.500h1M10 6.500h5M9 8.500h3M13 8.500h2M8 10.500h1M10 10.500h4M9 12.200h5" stroke="#111" stroke-width="1.100" fill="none"/></svg>
<div class="t " style="left:85px;top:282px;">wor...</div>
<div class="t " style="left:202px;top:282px;">Main</div>
<div class="dh" style="left:14px;top:302px;width:6px"></div>
<div class="pm p" style="left:5px;top:298px"></div>
<div class="t " style="left:22px;top:296px;">ODC_Option</div>
<div class="dh" style="left:14px;top:316px;width:6px"></div>
<div class="pm p" style="left:5px;top:312px"></div>
<div class="t " style="left:22px;top:310px;">ODC_Options</div>
<div class="dh" style="left:14px;top:330px;width:6px"></div>
<div class="pm p" style="left:5px;top:326px"></div>
<div class="t " style="left:22px;top:324px;">ProgressData</div>
<div class="dh" style="left:14px;top:344px;width:6px"></div>
<div class="pm p" style="left:5px;top:340px"></div>
<div class="t " style="left:22px;top:338px;">REAL</div>
<div class="dh" style="left:14px;top:358px;width:6px"></div>
<div class="pm p" style="left:5px;top:354px"></div>
<div class="t " style="left:22px;top:352px;">STRING</div>
<div class="dh" style="left:14px;top:372px;width:6px"></div>
<div class="pm p" style="left:5px;top:368px"></div>
<div class="t " style="left:22px;top:366px;">SearchWin</div>
<div class="dh" style="left:14px;top:386px;width:6px"></div>
<div class="pm p" style="left:5px;top:382px"></div>
<div class="t " style="left:22px;top:380px;">TIME</div>
<div class="dh" style="left:14px;top:400px;width:6px"></div>
<div class="pm p" style="left:5px;top:396px"></div>
<div class="t " style="left:22px;top:394px;">UINT</div>
</div>
<div class="vl" style="left:311px;top:80px;height:470px;background:#cfba46"></div>
<div class="vl" style="left:312px;top:80px;height:470px;background:#404040"></div>
<div class="vl" style="left:313px;top:81px;height:469px;background:#f4eecd"></div>
<div class="hl" style="left:316px;top:93px;width:498px;background:#f6f1db"></div>
<svg class="a" style="left:314px;top:78px" width="340" height="18" viewBox="0 0 340 18"><path d="M3.5 16.5 L6.5 5.5 Q7.5 2.5 10.5 2.5 L162 2.5 Q165 2.5 166 5.5 L169 16.5 Z" fill="#fff" stroke="none"/><path d="M3.5 16.5 L6.5 5.5 Q7.5 2.5 10.5 2.5 L162 2.5 Q165 2.5 166 5.5 L169 16.5" fill="none" stroke="#111" stroke-width="1.300"/><path d="M169 15.5 L172.5 6.5 Q173.5 3.5 176.5 3.5 L326.5 3.5 Q329.5 3.5 330.5 6.5 L333.5 14.5" fill="none" stroke="#111" stroke-width="1.300"/></svg>
<div class="t " style="left:340px;top:81px;width:120px;text-align:center">Definition</div>
<div class="t " style="left:506px;top:82px;width:120px;text-align:center">Text Definitions</div>
<div class="t " style="left:317px;top:100px;">Name</div>
<div class="sunk" style="left:387px;top:99px;width:359px;height:18px;"><div class="t">Main</div></div>
<div class="sunk" style="left:751px;top:102px;width:13px;height:13px;"></div>
<svg class="a" style="left:753px;top:104px" width="9" height="9" viewBox="0 0 9 9"><path d="M1 3.5L3.5 6L8 1.5" stroke="#000" stroke-width="2" fill="none"/></svg>
<div class="t " style="left:765px;top:102px;">System</div>
<div class="t " style="left:317px;top:127px;">Context Class</div>
<div class="grp" style="left:387px;top:122px;width:423px;height:26px"></div>
<div class="sunk" style="left:391px;top:126px;width:316px;height:18px;"></div>
<div class="sunk" style="left:715px;top:126px;width:70px;height:18px;"><div class="t">0</div></div>
<div class="btn" style="left:787px;top:126px;width:20px;height:18px"></div>
<svg class="a" style="left:790px;top:128px" width="15" height="14" viewBox="0 0 15 14"><path d="M5 5L10 10" stroke="#333" stroke-width="1.5"/><circle cx="4.5" cy="4.5" r="3" fill="#2040c0" stroke="#102060" stroke-width="0.8"/><circle cx="10" cy="9.5" r="3" fill="#f0a020" stroke="#805000" stroke-width="0.8"/></svg>
<div class="t " style="left:317px;top:156px;">Options</div>
<div class="grp" style="left:317px;top:171px;width:109px;height:157px"></div>
<div class="sunk" style="left:327px;top:178px;width:13px;height:13px;"></div>
<svg class="a" style="left:329px;top:180px" width="9" height="9" viewBox="0 0 9 9"><path d="M1 3.5L3.5 6L8 1.5" stroke="#000" stroke-width="2" fill="none"/></svg>
<div class="t " style="left:343px;top:178px;">Title</div>
<div class="sunk" style="left:327px;top:196px;width:13px;height:13px;"></div>
<svg class="a" style="left:329px;top:198px" width="9" height="9" viewBox="0 0 9 9"><path d="M1 3.5L3.5 6L8 1.5" stroke="#000" stroke-width="2" fill="none"/></svg>
<div class="t " style="left:343px;top:196px;">Close</div>
<div class="sunk" style="left:327px;top:215px;width:13px;height:13px;"></div>
<svg class="a" style="left:329px;top:217px" width="9" height="9" viewBox="0 0 9 9"><path d="M1 3.5L3.5 6L8 1.5" stroke="#000" stroke-width="2" fill="none"/></svg>
<div class="t " style="left:343px;top:215px;">Min/Max</div>
<div class="sunk" style="left:327px;top:233px;width:13px;height:13px;"></div>
<svg class="a" style="left:329px;top:235px" width="9" height="9" viewBox="0 0 9 9"><path d="M1 3.5L3.5 6L8 1.5" stroke="#000" stroke-width="2" fill="none"/></svg>
<div class="t " style="left:343px;top:233px;">Move</div>
<div class="sunk" style="left:327px;top:251px;width:13px;height:13px;"></div>
<svg class="a" style="left:329px;top:253px" width="9" height="9" viewBox="0 0 9 9"><path d="M1 3.5L3.5 6L8 1.5" stroke="#000" stroke-width="2" fill="none"/></svg>
<div class="t " style="left:343px;top:251px;">Resize</div>
<div class="sunk" style="left:327px;top:269px;width:13px;height:13px;"></div>
<div class="t " style="left:343px;top:269px;">System Modal</div>
<div class="sunk" style="left:327px;top:288px;width:13px;height:13px;"></div>
<div class="t " style="left:343px;top:288px;">Small Title</div>
<div class="sunk" style="left:327px;top:306px;width:13px;height:13px;"></div>
<div class="t " style="left:343px;top:306px;">Always on Top</div>
<div class="t " style="left:431px;top:156px;">Area</div>
<div class="grp" style="left:431px;top:171px;width:87px;height:157px"></div>
<div class="t " style="left:435px;top:176px;">Size</div>
<div class="grp" style="left:435px;top:191px;width:79px;height:51px"></div>
<div class="t " style="left:441px;top:200px;">Width</div>
<div class="sunk" style="left:476px;top:197px;width:33px;height:18px;"><div class="t">800</div></div>
<div class="t " style="left:441px;top:220px;">Height</div>
<div class="sunk" style="left:476px;top:217px;width:33px;height:18px;"><div class="t">600</div></div>
<div class="t " style="left:435px;top:256px;">Position</div>
<div class="grp" style="left:435px;top:271px;width:79px;height:51px"></div>
<div class="t " style="left:441px;top:280px;">X</div>
<div class="sunk" style="left:476px;top:277px;width:33px;height:18px;"><div class="t">0</div></div>
<div class="t " style="left:441px;top:300px;">Y</div>
<div class="sunk" style="left:476px;top:297px;width:33px;height:18px;"><div class="t">0</div></div>
<div class="t " style="left:525px;top:156px;">Alignment</div>
<div class="grp" style="left:525px;top:171px;width:205px;height:89px"></div>
<div class="t " style="left:531px;top:178px;">Parent</div>
<div class="sunk" style="left:601px;top:177px;width:124px;height:20px;"></div>
<div class="t " style="left:606px;top:181px;">POS_Screen</div>
<div class="btn" style="left:707px;top:179px;width:16px;height:16px"><div class="arr" style="left:3px;top:5px;"></div></div>
<div class="t " style="left:531px;top:204px;">Horizontal</div>
<div class="sunk" style="left:601px;top:203px;width:124px;height:20px;"></div>
<div class="t " style="left:606px;top:207px;">HPS_Center</div>
<div class="btn" style="left:707px;top:205px;width:16px;height:16px"><div class="arr" style="left:3px;top:5px;"></div></div>
<div class="t " style="left:531px;top:230px;">Vertical</div>
<div class="sunk" style="left:601px;top:229px;width:124px;height:20px;"></div>
<div class="t " style="left:606px;top:233px;">VPS_Center</div>
<div class="btn" style="left:707px;top:231px;width:16px;height:16px"><div class="arr" style="left:3px;top:5px;"></div></div>
<div class="t " style="left:525px;top:300px;">Inner Distance</div>
<div class="sunk" style="left:605px;top:299px;width:40px;height:18px;"><div class="t">0</div></div>
<div class="grp" style="left:317px;top:339px;width:495px;height:31px"></div>
<div class="t " style="left:323px;top:346px;">Class</div>
<div class="sunk" style="left:393px;top:345px;width:160px;height:20px;background:#ede3ae;"></div>
<div class="t " style="left:398px;top:349px;color:#8c8668">Main</div>
<div class="btn" style="left:535px;top:347px;width:16px;height:16px"><div class="arr" style="left:3px;top:5px;background:#9c9470"></div></div>
<div class="t " style="left:564px;top:346px;">Field Control</div>
<div class="sunk" style="left:635px;top:345px;width:172px;height:20px;"></div>
<div class="t " style="left:640px;top:349px;">main</div>
<div class="btn" style="left:789px;top:347px;width:16px;height:16px"><div class="arr" style="left:3px;top:5px;"></div></div>
<div class="hl" style="left:317px;top:531px;width:496px;background:#cfba46"></div>
<div class="hl" style="left:317px;top:532px;width:496px;background:#404040"></div>
<svg class="a" style="left:314px;top:528px" width="380" height="20" viewBox="0 0 380 20"><path d="M125.5 2 L125.5 4.5 L129.5 14.5 Q130.5 17.5 133.5 17.5 L241.5 17.5 Q244.5 17.5 245.5 14.5 L249.5 4.5 L249.5 2 Z" fill="#fff"/><path d="M3.5 4.5 L6.5 13.5 Q7.5 16.5 10.5 16.5 L118.5 16.5 Q121.5 16.5 122.5 13.5 L125.5 4.5" fill="none" stroke="#111" stroke-width="1.300"/><path d="M125.5 4.5 L129.5 14.5 Q130.5 17.5 133.5 17.5 L241.5 17.5 Q244.5 17.5 245.5 14.5 L249.5 4.5" fill="none" stroke="#111" stroke-width="1.300"/><path d="M250.5 4.5 L254.5 13.5 Q255.5 16.5 258.5 16.5 L365.5 16.5 Q368.5 16.5 369.5 13.5 L373.5 4.5" fill="none" stroke="#111" stroke-width="1.300"/></svg>
<div class="t " style="left:318px;top:531px;width:120px;text-align:center">Design</div>
<div class="t " style="left:441px;top:532px;width:120px;text-align:center">Properties</div>
<div class="t " style="left:566px;top:531px;width:120px;text-align:center">Context Class</div>
<svg class="a" style="left:803px;top:556px" width="15" height="15" viewBox="0 0 15 15"><path d="M1.5 14L14 1.5M5.5 14L14 5.5M9.5 14L14 9.5" stroke="#cfba46" stroke-width="2"/><path d="M0.5 14L13 1.5M4.5 14L13 5.5M8.5 14L13 9.5" stroke="#f6f1db" stroke-width="1.200"/></svg>
</body></html>
